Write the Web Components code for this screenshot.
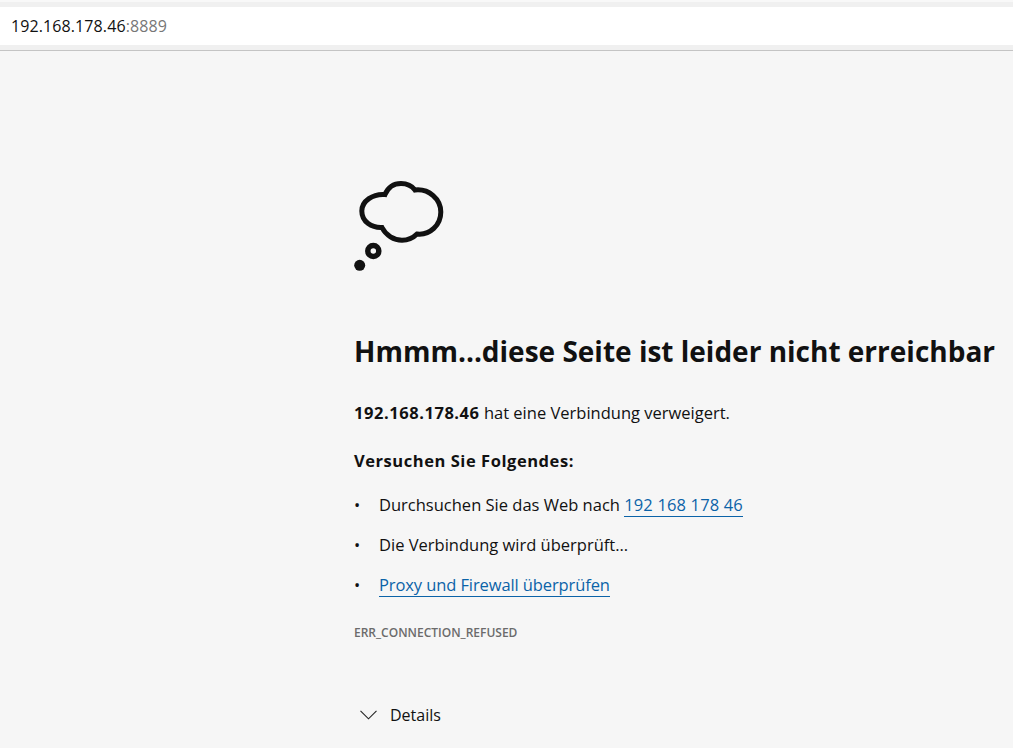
<!DOCTYPE html>
<html lang="de"><head><meta charset="utf-8"><title>192.168.178.46</title>
<style>
html,body{margin:0;padding:0;height:100%;overflow:hidden;background:#f6f6f6}
body{font-family:"Open Sans","Noto Sans",sans-serif;color:#111;display:flex;flex-direction:column}
b{letter-spacing:.55px}
</style></head><body>
<address-bar url="192.168.178.46" port=":8889"></address-bar>
<error-page>
  <thought-icon></thought-icon>
  <h-title>Hmmm...diese Seite ist leider nicht erreichbar</h-title>
  <p-line><b>192.168.178.46</b> hat eine Verbindung verweigert.</p-line>
  <p-line heading><b>Versuchen Sie Folgendes:</b></p-line>
  <bullet-item>Durchsuchen Sie das Web nach <x-link style="letter-spacing:.15px">192 168 178 46</x-link></bullet-item>
  <bullet-item>Die Verbindung wird überprüft...</bullet-item>
  <bullet-item><x-link style="letter-spacing:-.1px">Proxy und Firewall überprüfen</x-link></bullet-item>
  <err-code>ERR_CONNECTION_REFUSED</err-code>
  <details-toggle>Details</details-toggle>
</error-page>
<script>
function def(name, css, html, init){
  customElements.define(name, class extends HTMLElement{
    constructor(){super();const r=this.attachShadow({mode:'open'});r.innerHTML='<style>'+css+'</style>'+html;}
    connectedCallback(){ if(init) init(this); }
  });
}
def('address-bar',
 ':host{display:block;flex:none;background:#f0f0f0;border-top:2px solid #f8f8f8;padding:5px 0 5px;border-bottom:1px solid #c4c4c4}'+
 '.f{height:38px;background:#fff;display:flex;align-items:center;padding-left:11px;font-size:16px;letter-spacing:.1px;color:#111}'+
 '.p{color:#777}',
 '<div class="f"><span id="u"></span><span class="p" id="p"></span></div>',
 el=>{el.shadowRoot.getElementById('u').textContent=el.getAttribute('url');el.shadowRoot.getElementById('p').textContent=el.getAttribute('port');});
def('error-page',
 ':host{display:flex;flex-direction:column;align-items:flex-start;padding:129px 0 0 354px;flex:1}',
 '<slot></slot>');
def('thought-icon',':host{display:block;height:92px}svg{display:block}',
 '<svg width="92" height="92" viewBox="14 10 92 92" fill="none" stroke="#111"><path stroke-width="5" d="M45 24.5C48 17.5 54 13.5 61 13.5C67 13.5 72 16 75 20C89 18.5 100.8 29 100.8 42C100.8 55 90 65.5 77 64C73 68 68 70.2 62 70.2C54 70.2 46 65.5 42 57.5C32 58 21.8 52 21.8 41C21.8 31 33 23.5 45 24.5Z"/><circle cx="33.3" cy="81" r="5.5" stroke-width="5.5"/><circle cx="19.7" cy="95.3" r="5.5" fill="#111" stroke="none"/></svg>');
def('h-title',':host{display:block;font-size:28px;font-weight:700;line-height:36px;margin-top:61px;white-space:nowrap;color:#111}','<slot></slot>');
def('p-line',':host{display:block;font-size:16.5px;line-height:22px;margin-top:33px;white-space:nowrap}:host([heading]){margin-top:26px;padding-bottom:4px}','<slot></slot>');
def('bullet-item',':host{display:flex;font-size:16.5px;line-height:22px;margin-top:18px;white-space:pre}.b{width:25px;flex:none}','<span class="b">•</span><span><slot></slot></span>');
def('x-link',':host{color:#0b63a8;border-bottom:1px solid #0b63a8}','<slot></slot>');
def('err-code',':host{display:block;font-size:12px;font-weight:600;color:#6b6b6b;line-height:16px;margin-top:29px;white-space:nowrap}','<slot></slot>');
def('details-toggle',':host{display:flex;align-items:center;font-size:16px;line-height:22px;margin-top:63px}svg{display:block;margin:0 13px 0 6px}',
 '<svg width="17" height="10" viewBox="0 0 17 10" fill="none" stroke="#222" stroke-width="1.1"><path d="M.5 .8L8.5 8.8L16.5 .8"/></svg><slot></slot>');
</script>
</body></html>
